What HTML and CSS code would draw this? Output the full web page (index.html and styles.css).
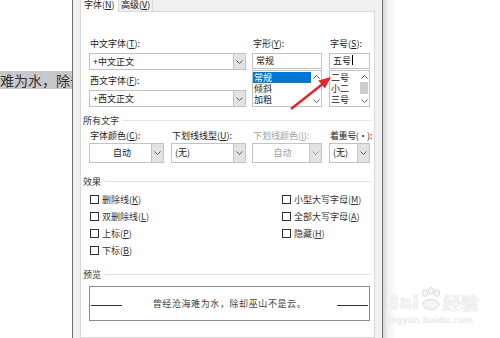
FILE: index.html
```html
<!DOCTYPE html>
<html lang="zh-CN">
  <head>
    <meta charset="UTF-8" />
    <title>字体</title>
    <link rel="stylesheet" href="styles.css">
  </head>
  <body>
    <div class="screen">
      <!-- document behind the dialog -->
      <div class="doc">
        <span class="hl">难为水，除去</span>
      </div>

      <!-- font dialog -->
      <div class="dialog">
        <div class="tabs">
          <div class="tab active">字体(<u>N</u>)</div>
          <div class="tab">高级(<u>V</u>)</div>
          <div class="tab-fill"></div>
        </div>

        <div class="panel">
          <div class="font-row">
            <div class="col c1">
              <div class="lbl">中文字体(<u>T</u>):</div>
              <div class="combo">
                <span class="val">+中文正文</span>
                <span class="drop"><svg width="7" height="4" viewBox="0 0 7 4"><polyline points="0.5,0.5 3.5,3.5 6.5,0.5" /></svg></span>
              </div>
              <div class="lbl gap">西文字体(<u>F</u>):</div>
              <div class="combo">
                <span class="val">+西文正文</span>
                <span class="drop"><svg width="7" height="4" viewBox="0 0 7 4"><polyline points="0.5,0.5 3.5,3.5 6.5,0.5" /></svg></span>
              </div>
            </div>

            <div class="col c2">
              <div class="lbl">字形(<u>Y</u>):</div>
              <div class="field">常规</div>
              <div class="list">
                <div class="items">
                  <div class="item sel">常规</div>
                  <div class="item">倾斜</div>
                  <div class="item">加粗</div>
                </div>
                <div class="scroll">
                  <svg width="7" height="4" viewBox="0 0 7 4"><polyline points="0.5,3.5 3.5,0.5 6.5,3.5" /></svg>
                  <span class="track"></span>
                  <svg width="7" height="4" viewBox="0 0 7 4"><polyline points="0.5,0.5 3.5,3.5 6.5,0.5" /></svg>
                </div>
              </div>
            </div>

            <div class="col c3">
              <div class="lbl">字号(<u>S</u>):</div>
              <div class="field">五号<span class="caret"></span></div>
              <div class="list">
                <div class="items">
                  <div class="item">二号</div>
                  <div class="item">小二</div>
                  <div class="item">三号</div>
                </div>
                <div class="scroll">
                  <svg width="7" height="4" viewBox="0 0 7 4"><polyline points="0.5,3.5 3.5,0.5 6.5,3.5" /></svg>
                  <span class="track"><span class="thumb"></span></span>
                  <svg width="7" height="4" viewBox="0 0 7 4"><polyline points="0.5,0.5 3.5,3.5 6.5,0.5" /></svg>
                </div>
              </div>
            </div>
          </div>

          <!-- all text -->
          <div class="group-title first"><span>所有文字</span></div>
          <div class="opt-row">
            <div class="opt w75">
              <div class="lbl2">字体颜色(<u>C</u>):</div>
              <div class="combo tall">
                <span class="val center">自动</span>
                <span class="drop"><svg width="7" height="4" viewBox="0 0 7 4"><polyline points="0.5,0.5 3.5,3.5 6.5,0.5" /></svg></span>
              </div>
            </div>
            <div class="opt w75 g7">
              <div class="lbl2">下划线线型(<u>U</u>):</div>
              <div class="combo tall">
                <span class="val">(无)</span>
                <span class="drop"><svg width="7" height="4" viewBox="0 0 7 4"><polyline points="0.5,0.5 3.5,3.5 6.5,0.5" /></svg></span>
              </div>
            </div>
            <div class="opt w70 g6 disabled">
              <div class="lbl2">下划线颜色(<u>I</u>):</div>
              <div class="combo tall">
                <span class="val center">自动</span>
                <span class="drop"><svg width="7" height="4" viewBox="0 0 7 4"><polyline points="0.5,0.5 3.5,3.5 6.5,0.5" /></svg></span>
              </div>
            </div>
            <div class="opt w41 g7">
              <div class="lbl2 tight">着重号(·):</div>
              <div class="combo tall">
                <span class="val">(无)</span>
                <span class="drop"><svg width="7" height="4" viewBox="0 0 7 4"><polyline points="0.5,0.5 3.5,3.5 6.5,0.5" /></svg></span>
              </div>
            </div>
          </div>

          <!-- effects -->
          <div class="group-title effects"><span>效果</span></div>
          <div class="checks">
            <label class="chk"><span class="box"></span>删除线(<u>K</u>)</label>
            <label class="chk"><span class="box"></span>双删除线(<u>L</u>)</label>
            <label class="chk"><span class="box"></span>上标(<u>P</u>)</label>
            <label class="chk"><span class="box"></span>下标(<u>B</u>)</label>
            <label class="chk"><span class="box"></span>小型大写字母(<u>M</u>)</label>
            <label class="chk"><span class="box"></span>全部大写字母(<u>A</u>)</label>
            <label class="chk"><span class="box"></span>隐藏(<u>H</u>)</label>
          </div>

          <!-- preview -->
          <div class="group-title preview-title"><span>预览</span></div>
          <div class="preview">
            <span class="rule"></span>
            <span class="sample">曾经沧海难为水，除却巫山不是云。</span>
            <span class="rule"></span>
          </div>
        </div>
      </div>

      <div class="backdrop">
        <div class="watermark">
          <div class="wm-logo">
            <span class="wm-bai">Bai</span>
            <svg class="paw" width="22" height="26" viewBox="0 0 22 26">
              <ellipse cx="5" cy="6" rx="2.6" ry="3.4" />
              <ellipse cx="11" cy="3.8" rx="2.6" ry="3.2" />
              <ellipse cx="17" cy="6" rx="2.6" ry="3.4" />
              <path d="M3 17 C3 11 19 11 19 17 C19 24 3 24 3 17 Z" />
            </svg>
            <span class="wm-jy">经验</span>
          </div>
          <div class="wm-url">jingyan.baidu.com</div>
        </div>
      </div>

      <!-- red pointer drawn over the screenshot -->
      <svg class="arrow" width="500" height="338" viewBox="0 0 500 338">
        <line x1="291" y1="109" x2="322" y2="84.5" />
        <polygon points="331,77 324.9,88.6 318.3,80.4" />
      </svg>
    </div>
  </body>
</html>
```

FILE: styles.css
```css
* {
  box-sizing: border-box;
}

body {
  margin: 0;
  font-family: "Noto Sans CJK SC", "Noto Sans", sans-serif;
  font-size: 9px;
  color: #222;
  background: #fff;
  overflow: hidden;
}

u {
  text-decoration: underline;
}

.screen {
  position: relative;
  display: flex;
  width: 500px;
  height: 338px;
  overflow: hidden;
}

/* document text */
.doc {
  flex: none;
  width: 72px;
  padding-top: 71px;
  overflow: hidden;
}

.doc .hl {
  display: block;
  height: 18px;
  line-height: 18px;
  font-size: 14px;
  white-space: nowrap;
  color: #333;
  background: #c9c9c9;
}

/* dialog frame */
.dialog {
  flex: none;
  display: flex;
  flex-direction: column;
  width: 311px;
  padding: 0 7px;
  background: #f0f0f0;
  border-left: 1px solid #707070;
  border-right: 1px solid #707070;
}

.tabs {
  display: flex;
  height: 12px;
}

.tab {
  flex: none;
  width: 34px;
  padding: 0 2px;
  line-height: 10px;
  white-space: nowrap;
  color: #222;
  border-right: 1px solid #d9d9d9;
  border-bottom: 1px solid #d9d9d9;
}

.tab.active {
  width: 39px;
  padding-left: 3px;
  background: #fff;
  border-left: 1px solid #d9d9d9;
  border-bottom: none;
}

.tab-fill {
  flex: 1;
  border-bottom: 1px solid #d9d9d9;
}

.panel {
  flex: 1;
  background: #fff;
  border: 1px solid #d9d9d9;
  border-top: none;
  padding: 25px 4px 0 8px;
}

/* font / style / size */
.font-row {
  display: flex;
}

.col {
  display: flex;
  flex-direction: column;
}

.c1 {
  width: 157px;
}

.c2 {
  width: 70px;
  margin-left: 6px;
}

.c3 {
  width: 41px;
  margin-left: 7px;
}

.lbl {
  height: 16px;
  line-height: 14px;
  padding-left: 1px;
}

.lbl.gap {
  margin-top: 4px;
}

.combo {
  display: flex;
  height: 17px;
  border: 1px solid #c3c3c3;
  background: #fff;
}

.combo .val {
  flex: 1;
  padding-left: 3px;
  line-height: 15px;
  white-space: nowrap;
}

.combo .val.center {
  text-align: center;
}

.drop {
  display: flex;
  align-items: center;
  justify-content: center;
  width: 12px;
  background: #e2e2e2;
  border-left: 1px solid #c3c3c3;
}

.drop svg polyline,
.scroll svg polyline {
  fill: none;
  stroke: #606060;
  stroke-width: 1;
}

.field {
  height: 16px;
  line-height: 14px;
  padding-left: 3px;
  border: 1px solid #c3c3c3;
}

.caret {
  display: inline-block;
  width: 1px;
  height: 10px;
  margin-left: 1px;
  vertical-align: -1px;
  background: #000;
}

.list {
  display: flex;
  height: 37px;
  margin-top: 1px;
  border: 1px solid #c3c3c3;
}

.items {
  flex: 1;
  padding-top: 1px;
}

.item {
  height: 11px;
  line-height: 11px;
  padding-left: 1px;
  color: #222;
}

.item.sel {
  background: #0078d7;
  color: #fff;
}

.scroll {
  display: flex;
  flex-direction: column;
  align-items: center;
  width: 10px;
  padding: 4px 0 3px;
}

.track {
  flex: 1;
  width: 100%;
  padding: 3px 1px;
}

.thumb {
  display: block;
  height: 12px;
  background: #cdcdcd;
}

/* group titles */
.group-title {
  display: flex;
  align-items: center;
  height: 12px;
  margin: 0 -1px 0 -6px;
  color: #333;
}

.group-title::after {
  content: "";
  flex: 1;
  height: 1px;
  margin-left: 3px;
  background: #e3e3e3;
}

.group-title.first {
  margin-top: 7px;
}

.group-title.effects {
  margin-top: 12px;
}

.group-title.preview-title {
  margin-top: 9px;
}

/* all text options */
.opt-row {
  display: flex;
  margin-top: 5px;
}

.w75 {
  width: 75px;
}

.w70 {
  width: 70px;
}

.w41 {
  width: 41px;
}

.g7 {
  margin-left: 7px;
}

.g6 {
  margin-left: 6px;
}

.lbl2 {
  height: 12px;
  line-height: 10px;
  padding-left: 1px;
  white-space: nowrap;
}

.lbl2.tight {
  letter-spacing: -0.4px;
}

.combo.tall {
  height: 20px;
}

.combo.tall .val {
  line-height: 18px;
}

.disabled .lbl2,
.disabled .val {
  color: #a0a0a0;
}

.disabled .drop svg polyline {
  stroke: #9a9a9a;
}

/* effects */
.checks {
  display: grid;
  grid-template-columns: 192px auto;
  grid-template-rows: repeat(4, 17px);
  grid-auto-flow: column;
  margin-top: 4px;
  padding-left: 1px;
}

.chk {
  display: flex;
  align-items: center;
  color: #333;
}

.box {
  width: 9px;
  height: 9px;
  margin-right: 3px;
  border: 1px solid #333;
  background: #fff;
}

/* preview */
.preview {
  display: flex;
  align-items: center;
  justify-content: space-between;
  height: 35px;
  margin-top: 6px;
  padding: 0 1px;
  border: 1px solid #8c8c8c;
}

.rule {
  width: 31px;
  height: 1px;
  margin-top: 4px;
  background: #333;
}

.sample {
  font-size: 9px;
  letter-spacing: 0.6px;
  color: #444;
}

/* page behind, right side */
.backdrop {
  flex: 1;
  padding: 283px 0 0 2px;
  background: linear-gradient(to right, #d5d5d5, #f2f2f2 5px, #fff 14px);
}

.watermark {
  color: #f4f4f4;
  text-shadow: 0 0 1px #c9c9c9;
}

.wm-logo {
  display: flex;
  align-items: flex-end;
  height: 30px;
}

.wm-bai {
  font-family: "DejaVu Sans", sans-serif;
  font-size: 19px;
  font-weight: bold;
  line-height: 22px;
}

.paw {
  margin: 0 1px;
}

.paw ellipse,
.paw path {
  fill: #f6f6f6;
  stroke: #d0d0d0;
  stroke-width: 0.8;
}

.wm-jy {
  font-size: 18px;
  font-weight: bold;
  line-height: 22px;
}

.wm-url {
  margin-top: 2px;
  font-family: "DejaVu Sans", sans-serif;
  font-size: 9px;
  letter-spacing: 0.3px;
}

/* annotation arrow */
.arrow {
  position: absolute;
  top: 0;
  left: 0;
  pointer-events: none;
}

.arrow line {
  stroke: #e3262b;
  stroke-width: 2.5;
}

.arrow polygon {
  fill: #e3262b;
}
```
